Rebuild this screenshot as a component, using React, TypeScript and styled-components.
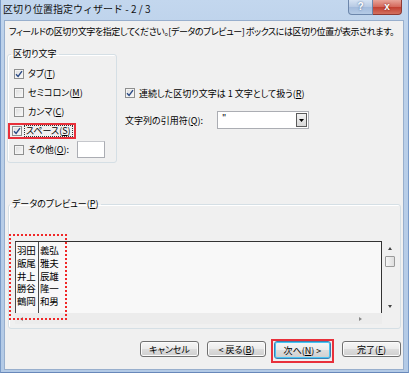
import styled, { createGlobalStyle } from 'styled-components'

const GlobalStyle = createGlobalStyle`
  html, body { margin: 0; padding: 0; }
  body {
    font-family: "Noto Sans CJK JP", "Noto Sans", sans-serif;
    font-size: 9px;
    color: #000;
    background: #fff;
  }
  * { box-sizing: border-box; }
`

const rows = [
  ['羽田', '義弘'],
  ['飯尾', '雅夫'],
  ['井上', '辰雄'],
  ['勝谷', '隆一'],
  ['鶴岡', '和男'],
]

function Check({ checked }: { checked?: boolean }) {
  return (
    <CheckBox>
      {checked && (
        <svg width="8" height="8" viewBox="0 0 8 8">
          <path d="M1 4.2 L3.1 6.4 L7 1.2" fill="none" stroke="#2a4a85" strokeWidth="1.4" />
        </svg>
      )}
    </CheckBox>
  )
}

function App() {
  return (
    <>
      <GlobalStyle />
      <Window>
        <TitleBar>
          <Caption>区切り位置指定ウィザード - 2 / 3</Caption>
          <CaptionButtons>
            <HelpButton>?</HelpButton>
            <CloseButton>x</CloseButton>
          </CaptionButtons>
        </TitleBar>
        <Body>
          <Instruction>
            フィールドの区切り文字を指定してください。[データのプレビュー] ボックスには区切り位置が表示されます。
          </Instruction>

          <Middle>
            <DelimGroup>
              <Legend>区切り文字</Legend>
              <OptionRow>
                <Check checked />
                <span>タブ(<u>T</u>)</span>
              </OptionRow>
              <OptionRow>
                <Check />
                <span>セミコロン(<u>M</u>)</span>
              </OptionRow>
              <OptionRow>
                <Check />
                <span>カンマ(<u>C</u>)</span>
              </OptionRow>
              <OptionRow>
                <Highlight>
                  <Check checked />
                  <Focused>スペース(<u>S</u>)</Focused>
                </Highlight>
              </OptionRow>
              <OptionRow>
                <Check />
                <span>その他(<u>O</u>):</span>
                <OtherInput />
              </OptionRow>
            </DelimGroup>

            <RightColumn>
              <OptionRow>
                <Check checked />
                <span>連続した区切り文字は 1 文字として扱う(<u>R</u>)</span>
              </OptionRow>
              <QuoteRow>
                <span>文字列の引用符(<u>Q</u>):</span>
                <Select>
                  <SelectValue>"</SelectValue>
                  <SelectArrow>
                    <svg width="5" height="3" viewBox="0 0 5 3">
                      <path d="M0 0 H5 L2.5 3 Z" fill="#000" />
                    </svg>
                  </SelectArrow>
                </Select>
              </QuoteRow>
            </RightColumn>
          </Middle>

          <PreviewGroup>
            <PreviewLegend>データのプレビュー(<u>P</u>)</PreviewLegend>
            <ListBox>
              <ListTop>
                <DataGrid>
                  <DataColumn $width={23}>
                    {rows.map(r => (
                      <Cell key={r[0]}>{r[0]}</Cell>
                    ))}
                  </DataColumn>
                  <DataColumn>
                    {rows.map(r => (
                      <Cell key={r[1]}>{r[1]}</Cell>
                    ))}
                  </DataColumn>
                </DataGrid>
                <VScroll>
                  <Arrow $dir="up" />
                  <Thumb />
                  <Spacer />
                  <Arrow $dir="down" />
                </VScroll>
              </ListTop>
              <HScroll>
                <Arrow $dir="left" />
                <Arrow $dir="right" />
              </HScroll>
              <DottedMark />
            </ListBox>
          </PreviewGroup>

          <ButtonRow>
            <Button>キャンセル</Button>
            <Button>&lt; 戻る(<u>B</u>)</Button>
            <RedFrame>
              <Button $primary>次へ(<u>N</u>) &gt;</Button>
            </RedFrame>
            <Button>完了(<u>F</u>)</Button>
          </ButtonRow>
        </Body>
      </Window>
    </>
  )
}

const Window = styled.div`
  width: 409px;
  height: 373px;
  display: flex;
  flex-direction: column;
  background: linear-gradient(#c3d7ee, #bcd1ea 40px, #b3cae6);
  border-left: 1px solid #7a9bc8;
  border-right: 1px solid #7a9bc8;
  border-bottom: 1px solid #6888ba;
  padding: 0 4px 2px 3px;
`

const TitleBar = styled.div`
  height: 20px;
  display: flex;
  align-items: flex-start;
  flex-shrink: 0;
`

const Caption = styled.div`
  margin: 3px 0 0 -1px;
  font-size: 10px;
  line-height: 12px;
  color: #111;
  white-space: pre;
`

const CaptionButtons = styled.div`
  margin-left: auto;
  margin-right: 2px;
  display: flex;
`

const HelpButton = styled.div`
  width: 25px;
  height: 15px;
  border: 1px solid #6c86ab;
  border-top: none;
  border-radius: 0 0 0 4px;
  background: linear-gradient(#d6e3f3, #b6c9e3 50%, #a3bbdc 51%, #b5cbe6);
  color: #fff;
  font-family: "Liberation Sans", sans-serif;
  font-weight: bold;
  font-size: 10px;
  line-height: 14px;
  text-align: center;
  text-shadow: 0 0 2px #3a5a88;
`

const CloseButton = styled.div`
  width: 29px;
  height: 15px;
  border: 1px solid #8e3a33;
  border-left: none;
  border-top: none;
  border-radius: 0 0 4px 0;
  background: linear-gradient(#e8a499, #d4675a 50%, #c23f30 51%, #d2705f);
  color: #fff;
  font-family: "Liberation Sans", sans-serif;
  font-weight: bold;
  font-size: 10px;
  line-height: 13px;
  text-align: center;
  text-shadow: 0 0 2px #6a1a12;
`

const Body = styled.div`
  flex: 1;
  display: flex;
  flex-direction: column;
  background: #f0f0f0;
  border: 1px solid #98afcd;
  padding: 5px 2px 0 2px;
`

const Instruction = styled.div`
  margin-left: 2px;
  line-height: 12px;
  white-space: nowrap;
  letter-spacing: -0.45px;
  font-feature-settings: "palt";
`

const Middle = styled.div`
  display: flex;
  align-items: flex-start;
  margin-top: 10px;
`

const DelimGroup = styled.fieldset`
  width: 110px;
  margin: 0;
  padding: 4px 4px 3px 6px;
  border: 1px solid #d5dfe5;
  border-radius: 3px;
  box-shadow: inset 1px 1px 0 #fff;
  min-inline-size: 0;
`

const Legend = styled.legend`
  padding: 0 2px;
  margin-left: -3px;
  line-height: 12px;
  font-feature-settings: "palt";
`

const PreviewLegend = styled(Legend)`
  margin-left: -5px;
`

const OptionRow = styled.div`
  height: 19px;
  display: flex;
  align-items: center;
  gap: 4px;
  white-space: nowrap;
  font-feature-settings: "palt";
`

const CheckBox = styled.span`
  width: 10px;
  height: 10px;
  flex-shrink: 0;
  display: inline-flex;
  align-items: center;
  justify-content: center;
  border: 1px solid #8e8f8f;
  background: linear-gradient(135deg, #dcdcdc, #fafafa);
  box-shadow: inset 0 0 0 1px #f4f4f4;
`

const Highlight = styled.div`
  display: flex;
  align-items: center;
  gap: 3px;
  height: 16px;
  margin-left: -6px;
  padding: 0 2px;
  border: 2px solid #e8303a;
`

const Focused = styled.span`
  line-height: 10px;
  padding: 0 1px;
  outline: 1px dotted #333;
`

const OtherInput = styled.div`
  width: 28px;
  height: 17px;
  margin-left: 4px;
  border: 1px solid #abadb3;
  border-top-color: #c5c7cc;
  background: #fff;
`

const RightColumn = styled.div`
  margin-left: 8px;
  padding-top: 38px;
  display: flex;
  flex-direction: column;
  & > ${OptionRow} {
    height: 14px;
  }
`

const QuoteRow = styled.div`
  margin-top: 11px;
  display: flex;
  align-items: center;
  height: 18px;
  font-feature-settings: "palt";
  & > span {
    width: 92px;
    white-space: nowrap;
  }
`

const Select = styled.div`
  width: 92px;
  height: 18px;
  display: flex;
  align-items: center;
  border: 1px solid #abadb3;
  background: #fff;
  padding: 1px;
`

const SelectValue = styled.span`
  flex: 1;
  padding-left: 3px;
  align-self: flex-start;
  line-height: 10px;
`

const SelectArrow = styled.div`
  width: 11px;
  height: 14px;
  display: flex;
  align-items: center;
  justify-content: center;
  border: 1px solid #5a5a5a;
  background: linear-gradient(#f2f2f2, #d8d8d8);
`

const PreviewGroup = styled.fieldset`
  margin: 35px 0 0 1px;
  padding: 0 3px 4px 6px;
  border: 1px solid #d5dfe5;
  border-radius: 3px;
  box-shadow: inset 1px 1px 0 #fff;
  min-inline-size: 0;
`

const ListBox = styled.div`
  position: relative;
  margin-top: 31px;
  height: 83px;
  display: flex;
  flex-direction: column;
`

const ListTop = styled.div`
  flex: 1;
  display: flex;
`

const DataGrid = styled.div`
  flex: 1;
  display: flex;
  background: #f8f8f8;
  border-top: 1px solid #333;
  border-right: 1px solid #333;
`

const DataColumn = styled.div<{ $width?: number }>`
  width: ${p => (p.$width ? `${p.$width}px` : 'auto')};
  border-left: 1px solid #4a4a4a;
  padding: 2px 0 0 1px;
`

const Cell = styled.div`
  font-size: 9.5px;
  line-height: 12.8px;
  letter-spacing: -0.3px;
  white-space: nowrap;
`

const VScroll = styled.div`
  width: 15px;
  display: flex;
  flex-direction: column;
  align-items: center;
  padding: 6px 0 5px;
`

const Spacer = styled.div`
  flex: 1;
`

const Thumb = styled.div`
  width: 10px;
  height: 11px;
  margin-top: 6px;
  border: 1px solid #9a9a9a;
  border-radius: 1px;
  background: linear-gradient(90deg, #f6f6f6, #dedede);
`

const Arrow = styled.div<{ $dir: 'up' | 'down' | 'left' | 'right' }>`
  width: 0;
  height: 0;
  border-style: solid;
  border-color: transparent;
  ${p =>
    p.$dir === 'up'
      ? 'border-width: 0 2.5px 3px; border-bottom-color: #444;'
      : p.$dir === 'down'
        ? 'border-width: 3px 2.5px 0; border-top-color: #444;'
        : p.$dir === 'left'
          ? 'border-width: 2.5px 3px 2.5px 0; border-right-color: #888;'
          : 'border-width: 2.5px 0 2.5px 3px; border-left-color: #888;'}
`

const HScroll = styled.div`
  height: 11px;
  display: flex;
  align-items: center;
  justify-content: space-between;
  padding: 0 20px 0 5px;
  background: #ececec;
  margin-right: 15px;
`

const DottedMark = styled.div`
  position: absolute;
  left: -6px;
  top: -7px;
  width: 58px;
  height: 86px;
  border: 2px dotted #f02828;
  pointer-events: none;
`

const ButtonRow = styled.div`
  display: flex;
  justify-content: flex-end;
  align-items: flex-start;
  margin-top: 10px;
  & > button {
    margin-top: 2px;
  }
  & > button:nth-child(2) {
    margin-left: 8px;
  }
  & > button:last-child {
    margin-left: 8px;
  }
`

const RedFrame = styled.div`
  margin-left: 5px;
  padding: 0 1px 2px;
  border: 2px solid #e8303a;
`

const Button = styled.button<{ $primary?: boolean }>`
  width: ${p => (p.$primary ? '57px' : '59px')};
  height: ${p => (p.$primary ? '18px' : '16px')};
  padding: 0;
  font-family: inherit;
  font-size: 9px;
  font-feature-settings: "palt";
  color: #000;
  border: 1px solid ${p => (p.$primary ? '#3c7fb1' : '#707070')};
  border-radius: 3px;
  background: linear-gradient(#f6f6f6, #ebebeb 50%, #dddddd 51%, #cfcfcf);
  box-shadow: inset 0 0 0 1px ${p => (p.$primary ? '#48c4f4' : '#fbfbfb')};
  white-space: nowrap;
`

export default App
